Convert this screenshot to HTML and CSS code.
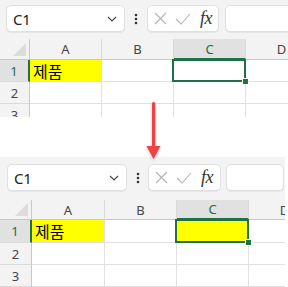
FILE: index.html
```html
<!DOCTYPE html>
<html>
<head>
<meta charset="utf-8">
<link rel="stylesheet" href="styles.css">
</head>
<body>
<div class="page">
  <div class="panel panel-top">
    <div class="toolbar">
      <div class="namebox"><span class="ref">C1</span><svg class="chev" width="10" height="6" viewBox="0 0 10 6"><path d="M1 1 L5 5 L9 1" fill="none" stroke="#444" stroke-width="1.1"/></svg></div>
      <div class="dots"><svg width="4" height="12" viewBox="0 0 4 12"><circle cx="2" cy="2" r="1.3" fill="#333"/><circle cx="2" cy="6" r="1.3" fill="#333"/><circle cx="2" cy="10" r="1.3" fill="#333"/></svg></div>
      <div class="fbox">
        <svg class="ico-x" width="13" height="13" viewBox="0 0 13 13"><path d="M1 1 L12 12 M12 1 L1 12" stroke="#b4b4b4" stroke-width="1.1" fill="none"/></svg>
        <svg class="ico-ok" width="16" height="12" viewBox="0 0 16 12"><path d="M1 6 L6 11 L15 1" stroke="#b4b4b4" stroke-width="1.1" fill="none"/></svg>
        <span class="fx">fx</span>
      </div>
      <div class="finput"></div>
    </div>
    <div class="sheet">
      <div class="corner"><svg width="13" height="13" viewBox="0 0 13 13"><polygon points="13,0 13,13 0,13" fill="#dcdcdc"/></svg></div>
      <div class="ch">A</div><div class="ch">B</div><div class="ch sel">C</div><div class="ch">D</div>
      <div class="rh sel">1</div><div class="cell fill"><span class="kr">제품</span></div><div class="cell"></div><div class="cell active"><i class="handle"></i></div><div class="cell"></div>
      <div class="rh">2</div><div class="cell"></div><div class="cell"></div><div class="cell"></div><div class="cell"></div>
      <div class="rh">3</div><div class="cell"></div><div class="cell"></div><div class="cell"></div><div class="cell"></div>
    </div>
  </div>

  <div class="panel panel-bottom">
    <div class="toolbar">
      <div class="namebox"><span class="ref">C1</span><svg class="chev" width="10" height="6" viewBox="0 0 10 6"><path d="M1 1 L5 5 L9 1" fill="none" stroke="#444" stroke-width="1.1"/></svg></div>
      <div class="dots"><svg width="4" height="12" viewBox="0 0 4 12"><circle cx="2" cy="2" r="1.3" fill="#333"/><circle cx="2" cy="6" r="1.3" fill="#333"/><circle cx="2" cy="10" r="1.3" fill="#333"/></svg></div>
      <div class="fbox">
        <svg class="ico-x" width="13" height="13" viewBox="0 0 13 13"><path d="M1 1 L12 12 M12 1 L1 12" stroke="#b4b4b4" stroke-width="1.1" fill="none"/></svg>
        <svg class="ico-ok" width="16" height="12" viewBox="0 0 16 12"><path d="M1 6 L6 11 L15 1" stroke="#b4b4b4" stroke-width="1.1" fill="none"/></svg>
        <span class="fx">fx</span>
      </div>
      <div class="finput"></div>
    </div>
    <div class="sheet">
      <div class="corner"><svg width="13" height="13" viewBox="0 0 13 13"><polygon points="13,0 13,13 0,13" fill="#dcdcdc"/></svg></div>
      <div class="ch">A</div><div class="ch">B</div><div class="ch sel">C</div><div class="ch">D</div>
      <div class="rh sel">1</div><div class="cell fill"><span class="kr">제품</span></div><div class="cell"></div><div class="cell active fill"><i class="handle"></i></div><div class="cell"></div>
      <div class="rh">2</div><div class="cell"></div><div class="cell"></div><div class="cell"></div><div class="cell"></div>
      <div class="rh">3</div><div class="cell"></div><div class="cell"></div><div class="cell"></div><div class="cell"></div>
    </div>
  </div>

  <svg class="arrow" width="17" height="62" viewBox="0 0 17 62"><rect x="7" y="2" width="3.2" height="46" rx="1.5" fill="#ef4146"/><polygon points="1.5,46 15.5,46 8.5,59" fill="#ef4146"/></svg>
</div>
</body>
</html>
```

FILE: styles.css
```css
html, body {
  margin: 0;
  padding: 0;
  background: #ffffff;
}
.page {
  position: relative;
  width: 288px;
  height: 287px;
  overflow: hidden;
  font-family: "Noto Sans", "Open Sans", sans-serif;
}
.panel {
  background: #f3f3f3;
  overflow: hidden;
}
.panel-top {
  width: 288px;
  height: 117px;
}
.panel-bottom {
  width: 285px;
  height: 130px;
  margin-top: 40px;
}
.toolbar {
  display: flex;
  align-items: center;
  height: 27px;
}
.panel-top .toolbar {
  padding: 5px 0 0 6px;
}
.panel-bottom .toolbar {
  padding: 7px 0 0 7px;
}
.namebox, .fbox, .finput {
  box-sizing: border-box;
  height: 27px;
  background: #ffffff;
  border: 1px solid #e0e0e0;
  border-radius: 5px;
  box-shadow: 0 1px 0 #e6e6e6;
  display: flex;
  align-items: center;
  flex: none;
}
.namebox {
  width: 119px;
  padding: 0 7px 0 6px;
  justify-content: space-between;
}
.panel-bottom .namebox {
  width: 120px;
}
.ref {
  font-size: 15px;
  color: #222;
  letter-spacing: -0.3px;
}
.chev {
  margin-top: 1px;
}
.dots {
  width: 22px;
  display: flex;
  justify-content: center;
  align-items: center;
  flex: none;
}
.panel-bottom .dots {
  width: 21px;
}
.fbox {
  width: 72px;
  padding-left: 6px;
}
.panel-bottom .fbox {
  width: 73px;
}
.ico-x {
  margin-right: 8px;
}
.ico-ok {
  margin-right: 9px;
}
.fx {
  font-family: "Liberation Serif", "DejaVu Serif", serif;
  font-style: italic;
  font-size: 18px;
  color: #333;
  line-height: 1;
  margin-top: -2px;
  letter-spacing: -0.5px;
}
.finput {
  width: 80px;
  margin-left: 6px;
}
.panel-bottom .finput {
  width: 58px;
  margin-left: 5px;
}
.sheet {
  display: grid;
  grid-template-columns: 30px 72px 72px 72px 72px;
  grid-template-rows: 21px 22px 22px 22px;
  margin-top: 7px;
}
.panel-bottom .sheet {
  grid-template-columns: 32px 73px 72px 72px 72px;
  grid-template-rows: 20px 23px 22px 22px;
  margin-top: 9px;
}
.corner {
  box-sizing: border-box;
  border-right: 1px solid #c8c8c8;
  border-bottom: 1px solid #c8c8c8;
  display: flex;
  justify-content: flex-end;
  align-items: flex-end;
  padding: 0 3px 3px 0;
}
.ch {
  box-sizing: border-box;
  border-right: 1px solid #dadada;
  border-bottom: 1px solid #c8c8c8;
  font-size: 13px;
  color: #444;
  display: flex;
  justify-content: center;
  align-items: center;
}
.ch.sel {
  background: #e1e1e1;
  color: #1e6e42;
  border-bottom: 2px solid #1e7145;
}
.rh {
  box-sizing: border-box;
  border-right: 1px solid #c8c8c8;
  border-bottom: 1px solid #dadada;
  font-size: 13px;
  color: #444;
  display: flex;
  justify-content: center;
  align-items: center;
}
.rh.sel {
  background: #e1e1e1;
  color: #1e6e42;
  border-right: 2px solid #1e7145;
}
.cell {
  box-sizing: border-box;
  background: #ffffff;
  border-right: 1px solid #e1e1e1;
  border-bottom: 1px solid #e1e1e1;
  display: flex;
  align-items: center;
  padding-left: 3px;
}
.cell.fill {
  background: #ffff00;
}
.kr {
  font-family: "Noto Sans CJK KR", "Noto Sans", sans-serif;
  font-size: 16px;
  color: #000;
  line-height: 1;
}
.cell.active {
  position: relative;
}
.cell.active::before {
  content: "";
  position: absolute;
  left: -2px;
  top: -1px;
  right: -1px;
  bottom: -1px;
  border: 2px solid #1e7145;
}
.handle {
  position: absolute;
  right: -4px;
  bottom: -4px;
  width: 5px;
  height: 5px;
  background: #1e7145;
  border: 1px solid #ffffff;
}
.arrow {
  position: absolute;
  left: 145px;
  top: 100px;
  filter: drop-shadow(0 1px 1.5px rgba(0,0,0,0.25));
}
```
